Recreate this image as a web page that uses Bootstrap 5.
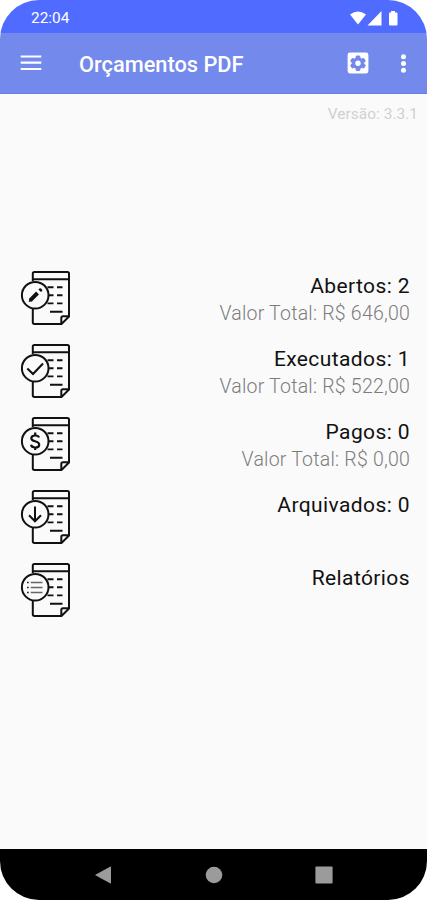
<!DOCTYPE html>
<html lang="pt-BR">
<head>
<meta charset="utf-8">
<meta name="viewport" content="width=device-width, initial-scale=1">
<title>Orçamentos PDF</title>
<link href="https://cdn.jsdelivr.net/npm/bootstrap@5.3.0/dist/css/bootstrap.min.css" rel="stylesheet">
<style>
body{font-family:Roboto,sans-serif;background:#fff}
.phone{width:427px;height:900px;border-radius:39px;background:#fafafa}
.status{height:33px;background:#506bff;padding:2px 28px 0 31px;font-size:15.4px}
.status span{padding-top:2px}
.toolbar{height:61px;background:#7389ec;padding:0 16px 0 20px;border-bottom:1px solid #667de9}
.toolbar h1{font-size:21.8px;font-weight:500;margin-left:37px;padding-top:4px;line-height:1}
.version{font-size:15.4px;color:#d0d0d0;letter-spacing:.05px;padding:9px 9px 0 0;height:168px}
.entry{height:73px;padding:8px 17px 0 20px}
.entry-title{font-size:21px;line-height:28px;color:#111;letter-spacing:.4px;padding-top:2px}
.entry-total{font-size:19.5px;line-height:27px;color:#7c7c7c;font-weight:300;letter-spacing:.22px}
.navkeys{height:51px;padding:0 94px}
</style>
</head>
<body>
<svg class="d-none">
<symbol id="doc" viewBox="20 270 52 56">
<g fill="none" stroke="#111" stroke-width="2">
<path d="M32.8 281V273.5q0-1.6 1.6-1.6H67.400q1.600 0 1.600 1.600V316.500L61.500 324H34.500q-1.700 0-1.700-1.700V308M33 279.200H69M61.300 323.500V318q0-1.700 1.700-1.700H68.500"/>
<path stroke-width="1.900" d="M47.500 287.200H53.500M57 287.200H62.500M49 295.200H53.500M57 295.200H62.500M47.500 303.400H53.500M57 303.400H62.500M50 311.700H62.500"/>
<circle cx="35.200" cy="295.200" r="13.300" fill="#fafafa"/>
</g>
</symbol>
</svg>
<div class="phone d-flex flex-column overflow-hidden">
<div class="status d-flex align-items-center justify-content-between text-white">
<span>22:04</span>
<svg width="49" height="16" viewBox="350 9 49 16" fill="#fff"><path d="M350 13.500Q358 7.500 366 13.500L358 23.500ZM381.500 10V24.500H367.500ZM391 10h4v1.500h1.500q1 0 1 1V23.500q0 1-1 1h-6.500q-1 0-1-1V12.500q0-1 1-1H391Z"/></svg>
</div>
<header class="toolbar d-flex align-items-center text-white">
<svg width="22" height="16" viewBox="0 0 22 16" stroke="#fff" stroke-width="2.200"><path d="M.7 1.500H21.300M.7 7.600H21.300M.7 14H21.300"/></svg>
<h1 class="mb-0">Orçamentos PDF</h1>
<svg class="ms-auto" width="22" height="22" viewBox="0 0 22 22"><rect x=".6" y=".6" width="20.800" height="20.800" rx="2.300" fill="#fff"/><path fill="#7389ec" stroke="#7389ec" stroke-linejoin="round" d="M9.400 4h3.200l.5 2.200 1.600.9 2.100-.7 1.600 2.800L16.800 10.500v1.400l1.600 1.400-1.600 2.800-2.100-.7-1.600.9-.5 2.200H9.400l-.5-2.200-1.600-.9-2.100.7-1.600-2.800 1.600-1.400v-1.400L3.600 9.200l1.600-2.800 2.100.7 1.600-.9Z"/><circle cx="11" cy="11.200" r="2.700" fill="#fff"/></svg>
<svg width="42" height="20" viewBox="0 0 42 20" fill="#fff"><circle cx="34.500" cy="3.800" r="2.500"/><circle cx="34.500" cy="10.500" r="2.500"/><circle cx="34.500" cy="17.300" r="2.500"/></svg>
</header>
<main class="flex-grow-1">
<div class="version text-end">Versão: 3.3.1</div>
<div class="entry d-flex justify-content-between align-items-start">
<svg width="52" height="56" viewBox="20 270 52 56"><use href="#doc" x="20" y="270" width="52" height="56"/><path d="M30.200 300.300L37.500 293" stroke="#111" stroke-width="4" fill="none"/><path d="M28.700 302l.7-3.200 2.500 2.500ZM38.400 289.500l1-1q.8-.7 1.600 0l1 1q.7.8 0 1.600l-1 1Z" fill="#111"/></svg>
<div class="text-end"><div class="entry-title">Abertos: 2</div><div class="entry-total">Valor Total: R$ 646,00</div></div>
</div>
<div class="entry d-flex justify-content-between align-items-start">
<svg width="52" height="56" viewBox="20 270 52 56"><use href="#doc" x="20" y="270" width="52" height="56"/><path d="M27.300 295.500L33 301L43 290.500" stroke="#111" stroke-width="2.100" fill="none"/></svg>
<div class="text-end"><div class="entry-title">Executados: 1</div><div class="entry-total">Valor Total: R$ 522,00</div></div>
</div>
<div class="entry d-flex justify-content-between align-items-start">
<svg width="52" height="56" viewBox="20 270 52 56"><use href="#doc" x="20" y="270" width="52" height="56"/><path d="M39 291.600Q38.500 289.500 35.200 289.500Q31.300 289.500 31.300 292.200Q31.300 294.300 35 295.200Q39.200 296.200 39.200 298.700Q39.200 301.500 35.200 301.500Q31.500 301.500 31 298.800M35.200 286.500V289.500M35.200 301.500V304" stroke="#111" stroke-width="2.200" fill="none"/></svg>
<div class="text-end"><div class="entry-title">Pagos: 0</div><div class="entry-total">Valor Total: R$ 0,00</div></div>
</div>
<div class="entry d-flex justify-content-between align-items-start">
<svg width="52" height="56" viewBox="20 270 52 56"><use href="#doc" x="20" y="270" width="52" height="56"/><path d="M35 287.500V302M29 296.300L35 302.300L41 296.300" stroke="#111" stroke-width="2" fill="none"/></svg>
<div class="text-end entry-title">Arquivados: 0</div>
</div>
<div class="entry d-flex justify-content-between align-items-start">
<svg width="52" height="56" viewBox="20 270 52 56"><use href="#doc" x="20" y="270" width="52" height="56"/><g stroke-width="1.700"><path stroke="#222" d="M27 290.500H28.700M27 295.500H28.700M27 300.500H28.700"/><path stroke="#666" d="M30.700 290.500H42.500M30.700 295.500H42.500M30.700 300.500H42.500"/></g></svg>
<div class="text-end entry-title">Relatórios</div>
</div>
</main>
<footer class="navkeys bg-black d-flex align-items-center justify-content-between">
<svg width="18" height="18" viewBox="0 0 18 18" fill="#9b9b9b"><path d="M1 9L16 .7q1-.4 1 .6V16.700q0 1-1 .6Z"/></svg>
<svg width="18" height="18" viewBox="0 0 18 18" fill="#9b9b9b"><circle cx="9" cy="9" r="8.300"/></svg>
<svg width="18" height="18" viewBox="0 0 18 18" fill="#9b9b9b"><rect x=".4" y=".4" width="17.200" height="17.200" rx="1"/></svg>
</footer>
</div>
<script src="https://cdn.jsdelivr.net/npm/bootstrap@5.3.0/dist/js/bootstrap.bundle.min.js"></script>
</body>
</html>
